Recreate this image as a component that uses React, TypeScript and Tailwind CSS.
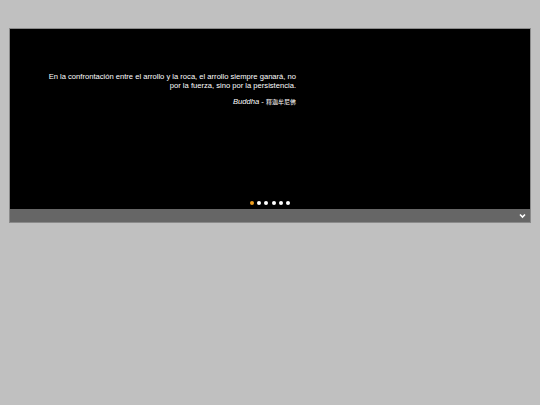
export default function App() {
  const dots = [0, 1, 2, 3, 4, 5];
  return (
    <div className="min-h-[405px] w-full bg-[#c0c0c0] pt-[28px] px-[9px] font-['Liberation_Sans',Arial,sans-serif]">
      <div className="border border-[#8a8a8a] w-[522px]">
        <div className="bg-black h-[180px] relative">
          <div className="pt-[43px] pl-[30px]">
            <div className="w-[256px] text-right text-white">
              <p className="text-[7.6px] leading-[9px]">
                En la confrontación entre el arrollo y la roca, el arrollo siempre ganará, no por la fuerza, sino por la persistencia.
              </p>
              <p className="text-[7.6px] leading-[9px] mt-[7px]">
                <span className="italic">Buddha</span> - <span className="text-[6px] font-['Noto_Sans_CJK_SC',sans-serif]">釋迦牟尼佛</span>
              </p>
            </div>
          </div>
          <div className="absolute bottom-[4px] left-0 right-0 flex justify-center">
            <div className="flex gap-[3.4px]">
              {dots.map((i) => (
                <span
                  key={i}
                  className={i === 0 ? "w-[4px] h-[4px] rounded-full bg-[#f0a020]" : "w-[4px] h-[4px] rounded-full bg-white"}
                />
              ))}
            </div>
          </div>
        </div>
        <div className="h-[13px] bg-[#666666] flex items-center justify-end pr-[4px]">
          <svg width="7" height="6" viewBox="0 0 7 6">
            <path d="M1 1.5 L3.5 4 L6 1.5" stroke="white" strokeWidth="1.6" fill="none" />
          </svg>
        </div>
      </div>
    </div>
  );
}
